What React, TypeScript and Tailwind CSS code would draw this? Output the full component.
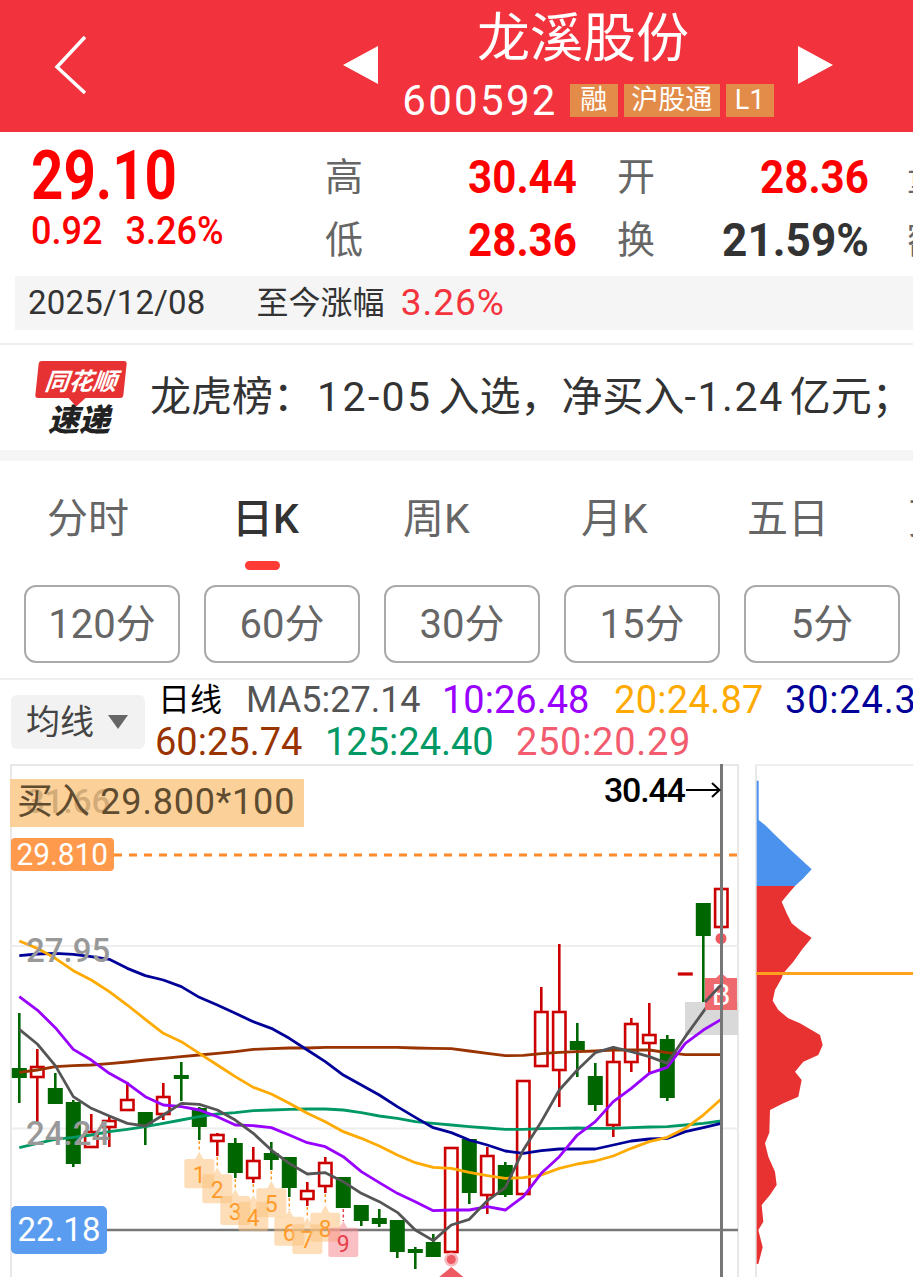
import React from 'react';

// page coordinates inside the chart svg: x = 19.3 + 18 * i, y as on the page
type Candle = [number, number, number, number, number]; // up?, high, low, top, bottom

const candles: Candle[] = [
  [0, 1013, 1103, 1068, 1078], [1, 1049, 1122, 1067, 1077], [0, 1073, 1104, 1088, 1104],
  [0, 1100, 1167, 1102, 1164], [1, 1114, 1148, 1132, 1147], [1, 1115, 1147, 1121, 1127],
  [1, 1082, 1111, 1100, 1110], [0, 1112, 1145, 1112, 1125], [1, 1083, 1120, 1097, 1114],
  [0, 1062, 1101, 1075, 1079], [0, 1107, 1140, 1108, 1127], [1, 1133, 1156, 1135, 1141],
  [0, 1138, 1178, 1143, 1173], [1, 1147, 1183, 1161, 1178], [0, 1142, 1170, 1153, 1160],
  [0, 1157, 1197, 1157, 1188], [1, 1182, 1206, 1191, 1199], [1, 1157, 1193, 1163, 1186],
  [0, 1177, 1208, 1177, 1208], [0, 1205, 1226, 1205, 1221], [0, 1209, 1227, 1218, 1224],
  [0, 1220, 1258, 1220, 1252], [0, 1247, 1269, 1249, 1253], [0, 1234, 1257, 1242, 1257],
  [1, 1148, 1252, 1148, 1252], [0, 1139, 1204, 1139, 1193], [1, 1147, 1214, 1156, 1195],
  [0, 1162, 1197, 1165, 1195], [1, 1081, 1194, 1081, 1194], [1, 987, 1066, 1012, 1066],
  [1, 944, 1107, 1012, 1070], [0, 1023, 1077, 1041, 1050], [0, 1063, 1111, 1076, 1105],
  [1, 1046, 1137, 1062, 1125], [1, 1018, 1072, 1024, 1062], [1, 1003, 1073, 1035, 1043],
  [0, 1035, 1101, 1039, 1098], [1, 974, 974, 973.7, 974.3], [0, 903, 1002, 903, 936], [1, 889, 927, 889, 927],
];

// y values read at 3x from the reference, one per candle
const maLines: { color: string; z: number[] }[] = [
  { color: '#009966', z: [1163, 1150, 1138, 1132, 1125, 1115, 1108, 1100, 1090, 1080, 1070, 1062, 1058, 1052, 1050, 1048, 1047, 1047, 1050, 1058, 1068, 1075, 1085, 1090, 1095, 1100, 1104, 1108, 1108, 1106, 1105, 1104, 1105, 1105, 1103, 1101, 1100, 1095, 1090, 1083] },
  { color: '#993300', z: [937, 930, 920, 917, 915, 911, 906, 900, 895, 890, 885, 880, 875, 868, 866, 864, 864, 862, 862, 862, 862, 862, 864, 865, 866, 873, 880, 887, 886, 881, 877, 875, 873, 870, 870, 870, 878, 884, 884, 884] },
  { color: '#000099', z: [587, 582, 580, 583, 590, 598, 625, 647, 660, 680, 712, 735, 760, 785, 805, 835, 870, 905, 945, 975, 1005, 1040, 1072, 1103, 1118, 1140, 1155, 1173, 1180, 1172, 1167, 1167, 1167, 1155, 1143, 1137, 1135, 1115, 1103, 1090] },
  { color: '#ffaa00', z: [543, 565, 595, 632, 660, 695, 735, 778, 820, 845, 880, 915, 950, 982, 1002, 1030, 1060, 1085, 1115, 1135, 1158, 1185, 1208, 1222, 1225, 1237, 1247, 1255, 1253, 1245, 1225, 1212, 1203, 1188, 1165, 1145, 1132, 1105, 1065, 1017] },
  { color: '#9900ff', z: [710, 750, 803, 868, 900, 940, 970, 1010, 1035, 1040, 1050, 1070, 1095, 1097, 1103, 1125, 1148, 1160, 1190, 1235, 1268, 1300, 1325, 1352, 1350, 1350, 1340, 1350, 1310, 1240, 1190, 1125, 1085, 1025, 985, 940, 922, 850, 810, 778] },
  { color: '#555555', z: [808, 852, 917, 1010, 1045, 1068, 1090, 1098, 1065, 1030, 1033, 1050, 1080, 1120, 1170, 1210, 1242, 1238, 1265, 1300, 1325, 1357, 1410, 1442, 1395, 1378, 1322, 1283, 1170, 1085, 990, 930, 878, 862, 875, 890, 910, 830, 755, 680] },
];

const tags = [
  { n: 1, i: 10, apex: 1175, top: 1197, bot: 1285 },
  { n: 2, i: 11, apex: 1222, top: 1243, bot: 1330 },
  { n: 3, i: 12, apex: 1287, top: 1308, bot: 1395 },
  { n: 4, i: 13, apex: 1305, top: 1325, bot: 1413 },
  { n: 5, i: 14, apex: 1263, top: 1285, bot: 1372 },
  { n: 6, i: 15, apex: 1349, top: 1370, bot: 1457 },
  { n: 7, i: 16, apex: 1372, top: 1393, bot: 1482 },
  { n: 8, i: 17, apex: 1335, top: 1358, bot: 1445 },
  { n: 9, i: 18, apex: 1383, top: 1403, bot: 1491 },
];

const cx = (i: number) => 19.3 + 18 * i;
const zy = (z: number) => 760 + z / 3;

const profileBlue = [[50, 62], [56, 62], [56, 180], [75, 195], [100, 220], [150, 268], [215, 328], [190, 355], [165, 378], [50, 378]];
const profileRed = [[50, 378], [165, 378], [150, 395], [125, 425], [140, 460], [155, 490], [180, 510], [215, 533], [185, 570], [160, 605], [130, 640], [125, 655], [105, 690], [98, 722], [115, 750], [145, 775], [180, 790], [240, 825], [248, 855], [235, 885], [190, 905], [165, 935], [185, 960], [175, 1010], [130, 1030], [90, 1050], [88, 1118], [75, 1150], [85, 1190], [105, 1235], [110, 1275], [90, 1305], [65, 1335], [70, 1385], [55, 1410], [68, 1462], [55, 1512], [50, 1512]];
const toPoints = (pts: number[][]) => pts.map(([x, y]) => `${x / 3},${y / 3}`).join(' ');

const KChart = () => (
  <svg viewBox="10 764 729 513" className="block w-[729px] h-[513px]">
    <rect x="11" y="765" width="727" height="520" fill="#fff" stroke="#e8e8e8" strokeWidth="2" />
    <line x1="11" x2="738" y1="946" y2="946" stroke="#eeeeee" strokeWidth="2" />
    <line x1="11" x2="738" y1="1128.5" y2="1128.5" stroke="#eeeeee" strokeWidth="2" />
    <rect x="685" y="1002" width="53" height="33" fill="#d9d9d9" />
    <line x1="114" x2="738" y1="855" y2="855" stroke="#ff8a2b" strokeWidth="3" strokeDasharray="8 7" />
    <line x1="100" x2="738" y1="1230" y2="1230" stroke="#777777" strokeWidth="2.5" />

    {candles.map(([up, high, low, top, bot], i) => {
      const x = cx(i);
      const color = up ? '#cc0000' : '#006600';
      return (
        <g key={i}>
          <line x1={x} x2={x} y1={high} y2={top} stroke={color} strokeWidth="2.6" />
          <line x1={x} x2={x} y1={bot} y2={low} stroke={color} strokeWidth="2.6" />
          {up ? (
            <rect x={x - 6.2} y={top} width="12.4" height={bot - top} fill="#fff" stroke={color} strokeWidth="2.6" />
          ) : (
            <rect x={x - 7.5} y={top} width="15" height={bot - top} fill={color} />
          )}
        </g>
      );
    })}

    {maLines.map((line) => (
      <polyline
        key={line.color}
        points={line.z.map((z, i) => `${cx(i)},${zy(z)}`).join(' ')}
        fill="none"
        stroke={line.color}
        strokeWidth="2.8"
        strokeLinejoin="round"
      />
    ))}

    <text x="26" y="962" fontSize="33" fontFamily="Roboto" fontWeight="500" fill="#999999">27.95</text>
    <text x="26" y="1145" fontSize="33" fontFamily="Roboto" fontWeight="500" fill="#999999">24.24</text>

    {tags.map((t) => {
      const x = cx(t.i);
      const pink = t.n === 9;
      const fill = pink ? '#f58a92' : '#fbc27e';
      const ink = pink ? '#e8404c' : '#ff9a2a';
      const top = zy(t.top);
      const bot = zy(t.bot);
      return (
        <g key={t.n}>
          <line x1={x} x2={x} y1={candles[t.i][2] + 1} y2={zy(t.apex)} stroke={ink} strokeWidth="1.5" strokeDasharray="3 2.5" />
          <path
            d={`M${x - 12.5} ${top}L${x - 4} ${top}L${x} ${zy(t.apex)}L${x + 4} ${top}L${x + 12.5} ${top}Q${x + 15} ${top} ${x + 15} ${top + 2.5}L${x + 15} ${bot - 2.5}Q${x + 15} ${bot} ${x + 12.5} ${bot}L${x - 12.5} ${bot}Q${x - 15} ${bot} ${x - 15} ${bot - 2.5}L${x - 15} ${top + 2.5}Q${x - 15} ${top} ${x - 12.5} ${top}Z`}
            fill={fill}
            fillOpacity="0.55"
          />
          <text x={x} y={top + 24} fontSize="23" fontFamily="Roboto" textAnchor="middle" fill={ink}>{t.n}</text>
        </g>
      );
    })}

    <circle cx="451.3" cy="1259.5" r="7" fill="#f7b9bc" />
    <circle cx="451.3" cy="1259.5" r="4.5" fill="#ee5a62" />
    <path d="M451.3 1267L438 1278L464.6 1278Z" fill="#ee5a62" />
    <circle cx="721" cy="938.5" r="5.5" fill="#ee5a62" />
    <line x1="722" x2="722" y1="944" y2="974" stroke="#f08a8f" strokeWidth="1.5" strokeDasharray="3 2" />
    <path d="M705 978L716 978L721.3 973L727 978L737 978L737 1010L705 1010Z" fill="#ef6a6f" />
    <text x="721" y="1005" fontSize="30" fontFamily="Roboto" textAnchor="middle" fill="#fff">B</text>
    <line x1="721.5" x2="721.5" y1="764" y2="1277" stroke="#777777" strokeWidth="3" />
    <polyline points="705,1002 721,985" fill="none" stroke="#555555" strokeWidth="2.8" />
    <path d="M686 790L719 790M712 783L719.5 790L712 797" fill="none" stroke="#000" strokeWidth="2" />
  </svg>
);

const Stat = ({ label, value, dark }: { label: string; value: string; dark?: boolean }) => (
  <div className="flex items-center">
    <span className="w-[40px] shrink-0 text-[38px] leading-[46px] text-[#666666]">{label}</span>
    <span className="w-[212px] text-right">
      <span
        className={`inline-block origin-right text-[46px] leading-[46px] font-bold ${dark ? 'scale-x-[0.96] text-[#333333]' : 'scale-x-[0.915] text-[#ff0000]'}`}
      >
        {value}
      </span>
    </span>
  </div>
);

export default function App() {
  return (
    <div className="w-[913px] h-[1277px] overflow-hidden bg-white font-['Roboto','Noto_Sans_CJK_SC',sans-serif]">
      {/* header */}
      <header className="h-[132px] bg-[#f2323c] flex items-center text-white">
        <svg width="34" height="60" viewBox="0 0 34 60" className="ml-[54px] mb-[3px] shrink-0">
          <path d="M31 2L3 32L31 58" fill="none" stroke="#fff" strokeWidth="3.5" />
        </svg>
        <svg width="36" height="38" viewBox="0 0 36 38" className="ml-[255px] mb-[2px] shrink-0">
          <path d="M35 0L0 19L35 38Z" fill="#fff" />
        </svg>
        <div className="w-[418px] shrink-0 self-start pt-[8px] flex flex-col items-center">
          <div className="text-[53px] leading-[52px] mb-[24px] font-['Noto_Sans_CJK_SC',sans-serif] pr-[10px]">龙溪股份</div>
          <div className="flex items-center">
            <span className="text-[42px] leading-[33px] tracking-[2.3px]">600592</span>
            <div className="flex ml-[12px] gap-[6px] text-[27px] leading-[33px] text-center">
              <span className="w-[48px] bg-[#e38c49]">融</span>
              <span className="w-[96px] bg-[#e38c49]">沪股通</span>
              <span className="w-[48px] bg-[#e38c49]">L1</span>
            </div>
          </div>
        </div>
        <svg width="36" height="38" viewBox="0 0 36 38" className="mb-[2px] shrink-0">
          <path d="M1 0L36 19L1 38Z" fill="#fff" />
        </svg>
      </header>

      {/* quote */}
      <section className="h-[144px] flex">
        <div className="w-[325px] pl-[31px] pt-[16px] shrink-0 text-[#ff0000]">
          <div className="origin-left scale-x-[0.83] text-[68px] leading-[56px] font-bold">29.10</div>
          <div className="flex gap-[24px] origin-left scale-x-[0.95] text-[38px] leading-[36px] font-medium mt-[9px]">
            <span>0.92</span>
            <span>3.26%</span>
          </div>
        </div>
        <div className="flex flex-col gap-[17px] pt-[22px] w-[588px] overflow-hidden shrink-0">
          <div className="flex w-[640px]">
            <Stat label="高" value="30.44" />
            <div className="ml-[40px] flex">
              <Stat label="开" value="28.36" />
              <span className="ml-[38px] text-[38px] leading-[46px] text-[#666666]">量</span>
            </div>
          </div>
          <div className="flex w-[640px]">
            <Stat label="低" value="28.36" />
            <div className="ml-[40px] flex">
              <Stat label="换" value="21.59%" dark />
              <span className="ml-[38px] text-[38px] leading-[46px] text-[#666666]">额</span>
            </div>
          </div>
        </div>
      </section>
      <div className="ml-[15px] h-[54px] bg-[#f5f5f5] flex items-center pl-[13px] text-[#333333]">
        <span className="text-[33px] tracking-[0.2px]">2025/12/08</span>
        <span className="ml-[51px] text-[32px]">至今涨幅</span>
        <span className="ml-[16px] text-[37px] leading-[44px] text-[#f4333d] tracking-[1px]">3.26%</span>
      </div>

      {/* news */}
      <div className="mt-[13px] h-[107px] border-t-2 border-[#eeeeee] flex items-center overflow-hidden">
        <div className="ml-[37px] w-[88px] shrink-0 flex flex-col items-center">
          <div className="relative w-[88px] h-[37px] bg-[#e63232] rounded-[3px] -skew-x-6 text-center text-white text-[24px] leading-[37px] font-bold italic font-['Noto_Sans_CJK_SC',sans-serif]">
            同花顺
            <div className="absolute left-[36px] -bottom-[6px] w-[12px] h-[12px] bg-[#e63232] rotate-45" />
          </div>
          <div className="mt-[4px] pr-[4px] text-[31px] leading-[32px] font-black italic text-[#222222] font-['Noto_Sans_CJK_SC',sans-serif]">速递</div>
        </div>
        <div className="ml-[25px] text-[41px] text-[#333333] whitespace-nowrap flex">
          <span>龙虎榜：</span>
          <span className="ml-[3px] tracking-[2.4px] mr-[6px]">12-05</span>
          <span>入选，净买入</span>
          <span className="tracking-[1.6px] mr-[6px]">-1.24</span>
          <span>亿元；</span>
        </div>
      </div>
      <div className="h-[11px] bg-[#f5f5f5]" />

      {/* period tabs */}
      <nav className="h-[100px] flex items-center text-[41px] leading-[50px] text-[#666666] whitespace-nowrap pt-[16px]">
        <span className="ml-[47px] w-[185px] shrink-0">分时</span>
        <span className="relative w-[171px] shrink-0 text-[#333333] font-medium">
          日K
          <span className="absolute left-[13px] top-[67px] w-[35px] h-[9px] rounded-full bg-[#ff3b35]" />
        </span>
        <span className="w-[178px] shrink-0">周K</span>
        <span className="w-[166px] shrink-0">月K</span>
        <span className="w-[161px] shrink-0">五日</span>
        <span className="shrink-0">更</span>
      </nav>
      <div className="flex gap-[24px] pl-[24px] h-[78px] mt-[24px] text-[40px] leading-[50px] text-[#666666]">
        {['120分', '60分', '30分', '15分', '5分'].map((label) => (
          <div key={label} className="w-[156px] h-[78px] pt-[2px] flex items-center justify-center rounded-[12px] border-2 border-[#aaaaaa]">
            {label}
          </div>
        ))}
      </div>

      {/* indicators */}
      <div className="mt-[15px] border-t-2 border-[#eeeeee] h-[86px] flex overflow-hidden">
        <div className="ml-[11px] mt-[15px] w-[134px] h-[54px] rounded-[6px] bg-[#f2f2f2] flex items-center pl-[15px] text-[34px] text-[#444444] shrink-0">
          均线
          <svg width="20" height="14" viewBox="0 0 20 14" className="ml-[14px]">
            <path d="M0 0L20 0L10 14Z" fill="#666666" />
          </svg>
        </div>
        <div className="ml-[10px] text-[38px] leading-[42px] whitespace-nowrap">
          <div className="flex mt-[-1px]">
            <span className="ml-[3px] w-[88px] shrink-0 text-[32px] text-black">日线</span>
            <span className="w-[196px] shrink-0 text-[36px] text-[#555555]">MA5:27.14</span>
            <span className="w-[172px] shrink-0 text-[#9900ff]">10:26.48</span>
            <span className="w-[171px] shrink-0 text-[#ffaa00] tracking-[0.3px]">20:24.87</span>
            <span className="shrink-0 text-[#000099] tracking-[0.8px]">30:24.34</span>
          </div>
          <div className="flex">
            <span className="w-[170px] shrink-0 text-[#993300]">60:25.74</span>
            <span className="w-[191px] shrink-0 text-[#009966]">125:24.40</span>
            <span className="shrink-0 text-[#f25c6e] tracking-[0.7px]">250:20.29</span>
          </div>
        </div>
      </div>

      {/* chart */}
      <div className="flex">
        <div className="relative ml-[10px] w-[729px] h-[513px] shrink-0">
          <KChart />
          <div className="absolute left-0 top-[15px] w-[294px] h-[48px] bg-[#fbd199] pl-[7px] text-[36px] leading-[46px] text-[#5f4b30] tracking-[0.8px]">
            <span className="absolute left-[16px] top-0 text-[33px] font-medium tracking-normal text-[#d3ab79]">31.66</span>
            <span className="relative">买入 29.800*100</span>
          </div>
          <div className="absolute left-[1px] top-[74px] w-[103px] h-[33px] rounded-[4px] bg-[#ff9a4d] text-center text-white">
            <span className="inline-block scale-x-[0.93] text-[32px] leading-[33px]">29.810</span>
          </div>
          <div className="absolute left-[1px] top-[442px] w-[96px] h-[48px] rounded-[5px] bg-[#5a9df0] text-center text-[33px] leading-[48px] text-white">22.18</div>
          <div className="absolute left-[594px] top-[7px] text-[34px] leading-[38px] font-medium text-black whitespace-nowrap tracking-[-1.2px]">30.44</div>
        </div>
        <div className="ml-[16px] grow">
          <svg viewBox="755 764 158 513" className="block w-[158px] h-[513px]">
            <line x1="756" x2="756" y1="765" y2="1277" stroke="#e8e8e8" strokeWidth="2" />
            <line x1="755" x2="913" y1="765" y2="765" stroke="#eeeeee" strokeWidth="2" />
            <g transform="translate(740 760)">
              <polygon points={toPoints(profileRed)} fill="#e83232" />
              <polygon points={toPoints(profileBlue)} fill="#4a92ee" />
            </g>
            <line x1="756" x2="913" y1="973.5" y2="973.5" stroke="#ffa01e" strokeWidth="3" />
          </svg>
        </div>
      </div>
    </div>
  );
}
